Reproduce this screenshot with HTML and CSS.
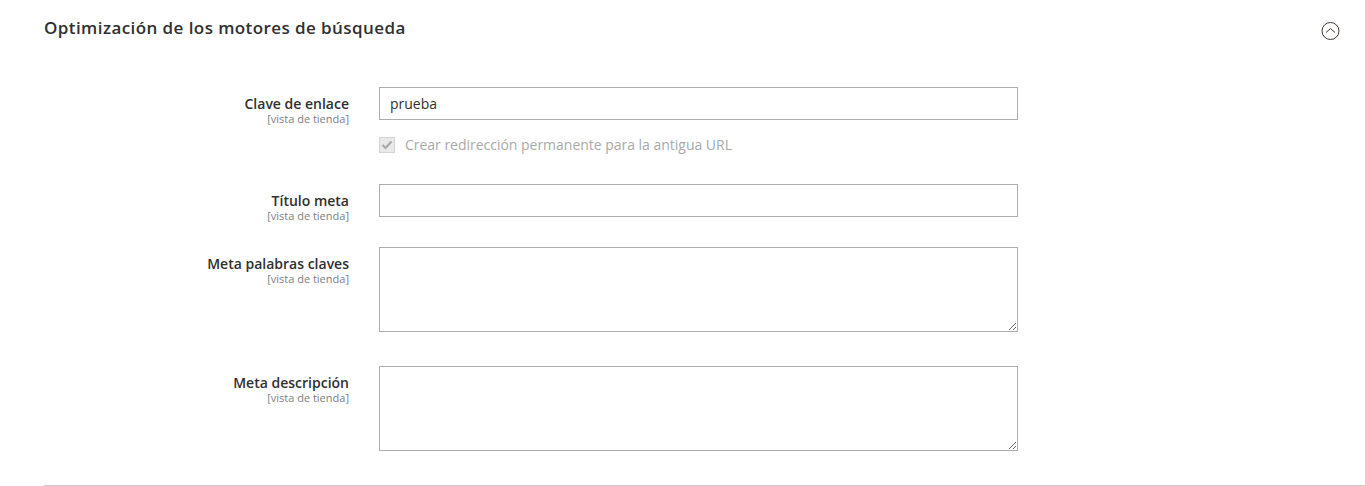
FILE: index.html
```html
<!DOCTYPE html>
<html lang="es">
<head>
  <meta charset="UTF-8">
  <meta name="viewport" content="width=device-width, initial-scale=1.0">
  <title>Optimización de los motores de búsqueda</title>
  <link rel="stylesheet" href="styles.css">
</head>
<body>
  <div class="section">
    <div class="section-head">
      <h2>Optimización de los motores de búsqueda</h2>
      <svg class="toggle" width="19" height="18" viewBox="0 0 19 18" fill="none">
        <circle cx="9.5" cy="9" r="8.5" stroke="#41362f" stroke-width="1"/>
        <path d="M5 10.5 L9.5 6.5 L14 10.5" stroke="#41362f" stroke-width="1"/>
      </svg>
    </div>

    <div class="field field-url">
      <div class="label">
        <label for="url-key">Clave de enlace</label>
        <span class="scope">[vista de tienda]</span>
      </div>
      <div class="control">
        <input id="url-key" type="text" value="prueba">
        <div class="redirect">
          <span class="check">
            <svg width="12" height="10" viewBox="0 0 12 10" fill="none">
              <path d="M1.5 5 L4.5 8 L10.5 1.5" stroke="#a8a8a8" stroke-width="2.2"/>
            </svg>
          </span>
          <span>Crear redirección permanente para la antigua URL</span>
        </div>
      </div>
    </div>

    <div class="field field-title">
      <div class="label">
        <label for="meta-title">Título meta</label>
        <span class="scope">[vista de tienda]</span>
      </div>
      <div class="control">
        <input id="meta-title" type="text">
      </div>
    </div>

    <div class="field field-keywords">
      <div class="label">
        <label for="meta-keywords">Meta palabras claves</label>
        <span class="scope">[vista de tienda]</span>
      </div>
      <div class="control">
        <textarea id="meta-keywords"></textarea>
      </div>
    </div>

    <div class="field">
      <div class="label">
        <label for="meta-description">Meta descripción</label>
        <span class="scope">[vista de tienda]</span>
      </div>
      <div class="control">
        <textarea id="meta-description"></textarea>
      </div>
    </div>
  </div>
</body>
</html>
```

FILE: styles.css
```css
html, body {
  margin: 0;
  height: 486px;
  overflow: hidden;
}
body {
  font-family: "Open Sans", sans-serif;
  font-size: 14px;
  color: #303030;
  background: #ffffff;
}
.section {
  box-sizing: border-box;
  height: 486px;
  margin-left: 44px;
  border-bottom: 1px solid #cccccc;
}
.section-head {
  display: flex;
  justify-content: space-between;
  align-items: flex-start;
  height: 87px;
  padding-right: 25px;
  box-sizing: border-box;
}
.section-head h2 {
  margin: 16px 0 0;
  font-size: 17px;
  line-height: 23px;
  font-weight: 600;
  letter-spacing: 0.42px;
  color: #303030;
}
.toggle {
  margin-top: 22px;
}
.field {
  display: flex;
}
.field-url {
  height: 97px;
}
.field-title {
  height: 63px;
}
.field-keywords {
  height: 119px;
}
.label {
  width: 305px;
  padding-top: 7px;
  text-align: right;
  display: flex;
  flex-direction: column;
}
.label label {
  font-weight: 600;
  line-height: 19px;
  color: #303030;
}
.scope {
  font-size: 11px;
  line-height: 12px;
  color: #808080;
}
.control {
  margin-left: 30px;
  width: 639px;
}
input, textarea {
  display: block;
  box-sizing: border-box;
  width: 639px;
  border: 1px solid #adadad;
  border-radius: 0;
  outline: none;
  font-family: "Open Sans", sans-serif;
  font-size: 14px;
  color: #303030;
  background: #ffffff;
}
input {
  height: 33px;
  padding: 0 10px;
}
textarea {
  height: 85px;
  padding: 6px 10px;
}
.redirect {
  display: flex;
  align-items: center;
  gap: 10px;
  margin-top: 15px;
  line-height: 19px;
  letter-spacing: -0.02px;
  color: #a9a9a9;
}
.check {
  box-sizing: border-box;
  width: 16px;
  height: 16px;
  display: flex;
  align-items: center;
  justify-content: center;
  border: 1px solid #d4d4d4;
  background: #e9e9e9;
}
```
